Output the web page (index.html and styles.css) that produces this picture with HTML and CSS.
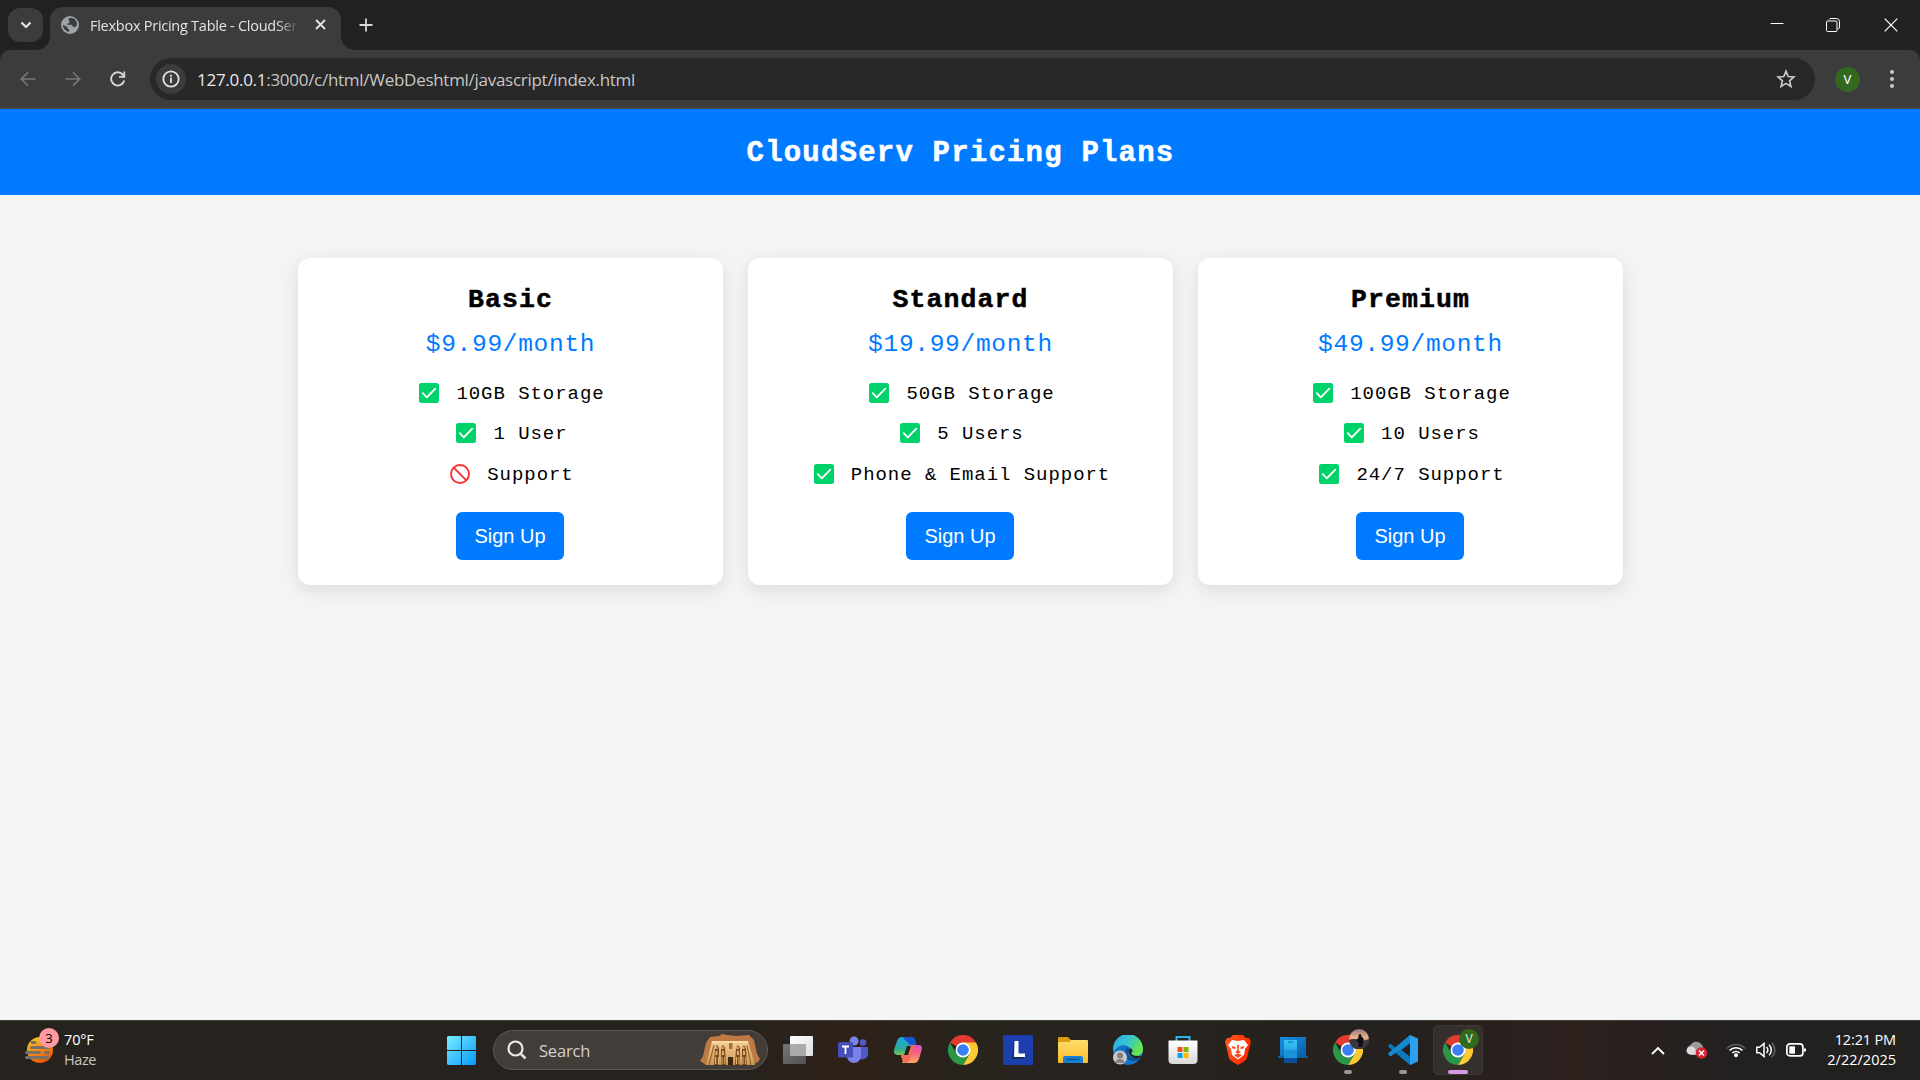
FILE: index.html
```html
<!DOCTYPE html>
<html lang="en">
<head>
<meta charset="utf-8">
<title>Flexbox Pricing Table - CloudServ</title>
<link rel="stylesheet" href="styles.css">
</head>
<body>
<svg class="defs" aria-hidden="true">
  <defs>
    <symbol id="check" viewBox="0 0 20 20"><rect width="20" height="20" rx="2.5" fill="#00d26a"/><path d="M3.8 10.2l4 4.1 8.5-8.6" fill="none" stroke="#fff" stroke-width="1.9" stroke-linecap="round" stroke-linejoin="round"/></symbol>
    <symbol id="ban" viewBox="0 0 20 20"><circle cx="10" cy="10" r="9" fill="none" stroke="#f92f32" stroke-width="1.9"/><path d="M3.7 3.7l12.6 12.6" stroke="#f92f32" stroke-width="1.9"/></symbol>
    <symbol id="chrome" viewBox="0 0 30 30"><path d="M15 15L2 7.5A15 15 0 0 1 28 7.5z" fill="#e33b2e"/><path d="M15 7.5H28A15 15 0 0 1 15 30L21.5 18.8z" fill="#fcc934"/><path d="M2 7.5A15 15 0 0 0 15 30L21.5 18.8 15 15 8.5 18.8z" fill="#2a9647"/><circle cx="15" cy="15" r="7.5" fill="#fff"/><circle cx="15" cy="15" r="5.8" fill="#3880f4"/></symbol>
    <linearGradient id="win" x2="1" y2="1"><stop stop-color="#77efff"/><stop offset="1" stop-color="#0797fc"/></linearGradient>
    <linearGradient id="sun" x2=".5" y2="1"><stop stop-color="#ffd21d"/><stop offset="1" stop-color="#e95808"/></linearGradient>
    <linearGradient id="stone" x2="0" y2="1"><stop stop-color="#f3cf98"/><stop offset="1" stop-color="#cf9852"/></linearGradient>
    <linearGradient id="grayf" x2="1" y2="1"><stop stop-color="#777"/><stop offset="1" stop-color="#505050"/></linearGradient>
    <linearGradient id="whitef" x2="1" y2="1"><stop stop-color="#fff"/><stop offset="1" stop-color="#ddd"/></linearGradient>
    <linearGradient id="copa" x2="0" y2="1"><stop stop-color="#19a4e8"/><stop offset=".5" stop-color="#2fae8c"/><stop offset="1" stop-color="#f5d51c"/></linearGradient>
    <linearGradient id="copb" x2="0" y2="1"><stop stop-color="#a652f5"/><stop offset=".55" stop-color="#f2598d"/><stop offset="1" stop-color="#ffab5c"/></linearGradient>
    <linearGradient id="fold" x2="0" y2="1"><stop stop-color="#ffdc6b"/><stop offset="1" stop-color="#fbbe2b"/></linearGradient>
    <linearGradient id="edge" x2="1" y2=".4"><stop stop-color="#2ba7e8"/><stop offset=".55" stop-color="#35c6d1"/><stop offset="1" stop-color="#67e44f"/></linearGradient>
    <linearGradient id="bag" x2="0" y2="1"><stop stop-color="#fff"/><stop offset="1" stop-color="#d9d9d9"/></linearGradient>
    <linearGradient id="lion" x2="1" y2=".3"><stop stop-color="#ff5a22"/><stop offset="1" stop-color="#ff2b00"/></linearGradient>
    <linearGradient id="lap" x2="1" y2="1"><stop stop-color="#1a8ee0"/><stop offset="1" stop-color="#0b5ea8"/></linearGradient>
    <linearGradient id="phone" x2="0" y2="1"><stop stop-color="#38c4f5"/><stop offset="1" stop-color="#1787d8"/></linearGradient>
    <linearGradient id="sky" x2="0" y2="1"><stop stop-color="#8d7a7d"/><stop offset=".45" stop-color="#f0b489"/><stop offset=".7" stop-color="#5a4b58"/><stop offset="1" stop-color="#39404d"/></linearGradient>
  </defs>
</svg>

<div class="screen">
  <div class="titlebar">
    <div class="tab-search"><svg width="12" height="8" viewBox="0 0 12 8"><path d="M1.5 1.5L6 6l4.500-4.500" fill="none" stroke="#e6e6e6" stroke-width="2.2"/></svg></div>
    <div class="tab">
      <svg width="18" height="18" viewBox="0 0 18 18"><circle cx="9" cy="9" r="9" fill="#9ba2aa"/><path d="M9.500 1.800c-2 .6-2.500 1.700-1.800 2.700 1 .4 1.300 1.300.5 2.300-.8 1-2 .7-2.200 1.900h3.900c1.600 0 1.900 1.300 1.900 2.400h1.700c1.600-.2 2.200-1.600 2.500-3.200-.2-3.300-2.900-6-6.500-6.100zM1.900 8.800c0 3.500 2.700 6.700 6.200 7.100v-2.600c-1.400-.2-1.700-1.200-1.700-2.400z" fill="#3c3c3c"/></svg>
      <span class="tab-title">Flexbox Pricing Table - CloudSer</span>
      <svg width="11" height="11" viewBox="0 0 11 11"><path d="M1 1l9 9M10 1l-9 9" stroke="#e3e3e3" stroke-width="1.800"/></svg>
    </div>
    <svg class="new-tab" width="14" height="14" viewBox="0 0 14 14"><path d="M7 .5v13M.5 7h13" stroke="#d8d8d8" stroke-width="1.800"/></svg>
    <div class="window-buttons">
      <svg width="14" height="14" viewBox="0 0 14 14"><path d="M.5 5.500h13" stroke="#fff"/></svg>
      <svg width="14" height="14" viewBox="0 0 14 14"><path d="M3 1.500Q3.500.5 5 .5h5.500q3 0 3 3V9q0 1.500-1.500 2" fill="none" stroke="#fff"/><rect x=".5" y="3" width="10.500" height="10.500" rx="1" fill="none" stroke="#fff"/></svg>
      <svg width="14" height="14" viewBox="0 0 14 14"><path d="M.7.700l12.600 12.600M13.300.700L.7 13.300" stroke="#fff" stroke-width="1.200"/></svg>
    </div>
  </div>

  <div class="toolbar">
    <div class="nav-buttons">
      <svg width="16" height="16" viewBox="0 0 16 16"><path d="M15.500 8H1.500M8 1.300L1.300 8 8 14.700" fill="none" stroke="#777" stroke-width="1.700"/></svg>
      <svg width="16" height="16" viewBox="0 0 16 16"><path d="M.5 8h14M8 1.300L14.700 8 8 14.700" fill="none" stroke="#777" stroke-width="1.700"/></svg>
      <svg width="16" height="16" viewBox="0 0 16 16"><path d="M14.200 9.500A6.600 6.600 0 1 1 12.700 3.500L14.500 5.500" fill="none" stroke="#d5d5d5" stroke-width="1.900"/><path d="M15.200.5v6.200H9V5h4.400V.5z" fill="#d5d5d5"/></svg>
    </div>
    <div class="address">
      <span class="site-info"><svg width="18" height="18" viewBox="0 0 18 18"><circle cx="9" cy="9" r="7.700" fill="none" stroke="#e3e3e3" stroke-width="1.800"/><path d="M9 7.700v5.200M9 4.800v1.900" stroke="#e3e3e3" stroke-width="1.800"/></svg></span>
      <span class="url">127.0.0.1<span>:3000/c/html/WebDeshtml/javascript/index.html</span></span>
      <svg class="star" width="20" height="20" viewBox="0 0 20 20"><path d="M10 2.200l2.200 5.300 5.700.5-4.300 3.800 1.300 5.600L10 14.400l-4.900 3 1.300-5.600L2.100 8l5.700-.5z" fill="none" stroke="#c9c9c9" stroke-width="1.700"/></svg>
    </div>
    <span class="profile">V</span>
    <svg class="menu" width="6" height="18" viewBox="0 0 6 18"><g fill="#c9c9c9"><circle cx="3" cy="2" r="2"/><circle cx="3" cy="9" r="2"/><circle cx="3" cy="16" r="2"/></g></svg>
  </div>

  <main class="page">
    <header class="header"><h1>CloudServ Pricing Plans</h1></header>
    <section class="pricing">
      <article class="card">
        <h2>Basic</h2>
        <p class="price">$9.99/month</p>
        <ul>
          <li><svg><use href="#check"/></svg>10GB Storage</li>
          <li><svg><use href="#check"/></svg>1 User</li>
          <li><svg><use href="#ban"/></svg>Support</li>
        </ul>
        <button>Sign Up</button>
      </article>
      <article class="card">
        <h2>Standard</h2>
        <p class="price">$19.99/month</p>
        <ul>
          <li><svg><use href="#check"/></svg>50GB Storage</li>
          <li><svg><use href="#check"/></svg>5 Users</li>
          <li><svg><use href="#check"/></svg>Phone &amp; Email Support</li>
        </ul>
        <button>Sign Up</button>
      </article>
      <article class="card">
        <h2>Premium</h2>
        <p class="price">$49.99/month</p>
        <ul>
          <li><svg><use href="#check"/></svg>100GB Storage</li>
          <li><svg><use href="#check"/></svg>10 Users</li>
          <li><svg><use href="#check"/></svg>24/7 Support</li>
        </ul>
        <button>Sign Up</button>
      </article>
    </section>
  </main>

  <footer class="taskbar">
    <div class="weather">
      <div class="weather-icon">
        <svg width="28" height="30" viewBox="0 0 28 30"><circle cx="15" cy="15" r="13" fill="url(#sun)"/><path d="M7 7.500h3M6.500 12.500h17M1.500 17.500h13M20.500 17.500h3M1.500 22.500h21" stroke="#77716b" stroke-width="3" stroke-linecap="round"/></svg>
        <span class="count">3</span>
      </div>
      <div class="weather-text"><span>70°F</span><span class="dim">Haze</span></div>
    </div>
    <div class="apps">
      <div class="app"><svg width="29" height="29" viewBox="0 0 29 29"><path d="M1 0h13v14H0V1zM15 0h13l1 1v13H15zM0 15h14v14H1l-1-1zM15 15h14v13l-1 1H15z" fill="url(#win)"/></svg></div>
      <div class="search">
        <svg width="20" height="20" viewBox="0 0 20 20"><circle cx="8.500" cy="8.500" r="7" fill="none" stroke="#e8ebef" stroke-width="2.200"/><path d="M13.500 13.500l5 5" stroke="#dde1e6" stroke-width="2.600"/></svg>
        <span>Search</span>
        <svg class="temple" width="60" height="32" viewBox="0 0 60 32"><path d="M0 27l3-5L6 9l4-6 9-1 3-2 5 1 10 1 12-1 5 5 3 14 3 5-2 3-6 3H6z" fill="#bf7a44"/><path d="M6 31L12 7h36l7 24z" fill="url(#stone)"/><path d="M12 8h36" stroke="#fbdcab" stroke-width="1.500"/><path d="M9 31l5-20M51 31l-4-20" stroke="#9a622c" stroke-width="1.200"/><path d="M28 31v-8h5v8z" fill="#3d2610"/><path d="M29 9h3.500v6H29z" fill="#a87339"/><g fill="#7b4e22"><path d="M14 31l1-17 2-3 2 3v17zM21 31V14l2-3 2 3 1 17zM35 31l1-17 2-3 2 3v17zM42 31V14l2-3 2 3 1 17z"/></g><g fill="#dfae6b"><circle cx="16.500" cy="14" r="1.300"/><circle cx="22.500" cy="14" r="1.300"/><circle cx="37.500" cy="14" r="1.300"/><circle cx="43.500" cy="14" r="1.300"/><path d="M15.500 17h2v4h-2zM22 17h2v4h-2zM37 17h2v4h-2zM43 17h2v4h-2zM15 23h1.200v7H15zM18 23h1v7h-1zM21.500 23h1v7h-1zM24.300 23h1v7h-1zM36 23h1v7h-1zM38.500 23h1v7h-1zM42.500 23h1v7h-1zM45.300 23h1v7h-1z"/></g></svg>
      </div>
      <div class="app"><svg width="30" height="28" viewBox="0 0 30 28"><rect y="8" width="23" height="20" rx="1" fill="url(#grayf)"/><rect x="7" width="23" height="20" rx="1" fill="url(#whitef)"/><path d="M7 8h16v12H7z" fill="#aaa"/></svg></div>
      <div class="app"><svg width="30" height="28" viewBox="0 0 30 28"><circle cx="25" cy="6.500" r="3.300" fill="#5059c9"/><path d="M20 11h10v7a5.500 5.500 0 0 1-10 3z" fill="#5059c9"/><circle cx="16" cy="5" r="4.500" fill="#7b83eb"/><path d="M9 11h14v9a7 7 0 0 1-14 0z" fill="#7b83eb"/><rect y="6" width="15" height="15.500" rx="1.500" fill="#474fbb"/><path d="M4 10.500h7M7.500 10.500v7.500" stroke="#fff" stroke-width="1.800"/></svg></div>
      <div class="app"><svg width="30" height="28" viewBox="0 0 30 28"><path d="M18 2h3l2 7h4q3 1 1.500 5.500L26 23q-1.500 4-5 4H9l2-3z" fill="url(#copb)"/><path d="M12 26H10l-2-7H4q-4-1-3-5L4 5q1.500-4 5-4h11l-2 3-4.500 14q-1 2-4 2z" fill="url(#copa)"/><path d="M10 1h9q2.500 0 3.500 4l1 4h-5q-3 0-3.500-2T11 3z" fill="#1656d1"/><path d="M8 19h4q3 0 4-3l2-7h4l-5 14q-1.500 4-4 4-3 0-4-4z" fill="#f36b5c"/><path d="M14 10h4l-3 9h-4z" fill="#292019"/></svg></div>
      <div class="app"><svg width="30" height="30"><use href="#chrome"/></svg></div>
      <div class="app"><svg width="30" height="30" viewBox="0 0 30 30"><path d="M0 0h30v30H0z" fill="#1c3fad"/><path d="M11 6l-2 18h11l2-4h-9z" fill="#0d2d5c"/><path d="M11.500 6h4v12.500H22V22H11z" fill="#fff"/></svg></div>
      <div class="app"><svg width="30" height="28" viewBox="0 0 30 28"><path d="M0 2q0-1 1-1h9l3 3v5H0z" fill="#dd9b08"/><path d="M0 6h11l2-2h16q1 0 1 1v21q0 1-1 1H1q-1 0-1-1z" fill="url(#fold)"/><path d="M5 27v-5q0-2 2-2h16q2 0 2 2v5z" fill="#1283d5"/><path d="M9 23.500h12" stroke="#075390" stroke-width="1.400" stroke-linecap="round"/></svg></div>
      <div class="app"><svg width="32" height="30" viewBox="0 0 32 30"><circle cx="16" cy="15" r="15" fill="#1474c9"/><path d="M1 14A15 15 0 0 1 31 14q0 6-6 7-8 0-7-3 2-3-1-6-5-4-11 0-4 3-4 5z" fill="url(#edge)"/><path d="M16 12q-5 4-2 10 4 6 13 3l2-3q-5 2-10 0-4-2-3-5 2-2 0-5z" fill="#0c4f94"/><path d="M19 13q3 4 0 5 1 3 7 3h4v1q-8 3-12-2-3-4 1-7z" fill="#26211e"/><circle cx="8" cy="22.500" r="7" fill="#c9c9c7"/><circle cx="8" cy="20.500" r="3" fill="#85817e"/><path d="M3.500 28q0-4 4.500-4t4.500 4z" fill="#85817e"/></svg></div>
      <div class="app"><svg width="30" height="30" viewBox="0 0 30 30"><path d="M8.500 7V2h13v5" fill="none" stroke="#29b6f0" stroke-width="2"/><path d="M.5 5.500h29V25q0 4-4 4h-21q-4 0-4-4z" fill="url(#bag)"/><path d="M9.500 12h5v5h-5z" fill="#f25022"/><path d="M15.500 12h5v5h-5z" fill="#7fba00"/><path d="M9.500 18h5v5h-5z" fill="#00a4ef"/><path d="M15.500 18h5v5h-5z" fill="#ffb900"/></svg></div>
      <div class="app"><svg width="26" height="30" viewBox="0 0 26 30"><path d="M8 0h10l3 3 3 0 2 4-1 3-3 13q-1 3-9 7-8-4-9-7L1 10 0 7l2-4 3 0z" fill="url(#lion)"/><path d="M7 5l6 1 6-1 4 5-3 4-1 6-6 4.500L7 20l-1-6-3-4z" fill="#fff"/><path d="M6.500 11l4 1v2l-3-.5zM19.500 11l-4 1v2l3-.5zM12 10h2l-.3 5 2 2.500-2.700 1-2.700-1 2-2.500zM9 20l4-1.500 4 1.500-4 3z" fill="#ff451c"/></svg></div>
      <div class="app"><svg width="30" height="28" viewBox="0 0 30 28"><path d="M2 1h26v19H2z" fill="url(#lap)"/><path d="M0 20h30v1q0 1-1 1H1q-1 0-1-1z" fill="#0f5f9e"/><path d="M6 4h13v23H6z" fill="url(#phone)"/><path d="M10 6h5" stroke="#0e63a8"/><path d="M6 14h13v8H6z" fill="#1a93db"/><path d="M6 22h13v5H6z" fill="#0a4e99"/></svg></div>
      <div class="app running"><svg width="30" height="30"><use href="#chrome"/></svg><svg class="badge" viewBox="0 0 20 20"><circle cx="10" cy="10" r="10" fill="url(#sky)"/><path d="M0 11q5-2 10 0t10-1a10 10 0 0 1-20 1z" fill="#39373f"/><path d="M11 5q1.800 0 1.300 2.500l2 1.500.2 4-1 1.500v3.500h-4v-5l-2.500-1 2.500-3.500Q9.300 5 11 5z" fill="#120f14"/></svg></div>
      <div class="app running"><svg width="30" height="30" viewBox="0 0 30 30"><path d="M22 0L8 13 2.500 8.800.5 10v2L22 30l2-1V7z" fill="#0c78bd"/><path d="M22 0v7.500L2.500 21.500.5 20v-2z" fill="#168ad2"/><path d="M22 0l8 3.500v23L22 30z" fill="#2ba1f0"/><path d="M22 8.500v13L13.500 15z" fill="#27211e"/></svg></div>
      <div class="app running active"><svg width="30" height="30"><use href="#chrome"/></svg><span class="badge letter">V</span></div>
    </div>
    <div class="tray">
      <svg class="chev" width="14" height="9" viewBox="0 0 14 9"><path d="M1 8l6-6 6 6" fill="none" stroke="#fff" stroke-width="1.900"/></svg>
      <svg class="cloud" width="22" height="18" viewBox="0 0 22 18"><path d="M5 14a5 5 0 0 1-1-9.500A7 7 0 0 1 16 4q2 2 1 6l-5 4z" fill="#9b9b9b"/><path d="M4.500 13.500q-4-.5-4-4 .5-4 5-4 2.500.2 4 2.500L10 13.500z" fill="#dcdcdc"/><circle cx="15.500" cy="12" r="5.800" fill="#d7232f"/><path d="M13 9.500l5 5M18 9.500l-5 5" stroke="#fff" stroke-width="1.500"/></svg>
      <svg class="wifi" width="20" height="16" viewBox="0 0 20 16"><g fill="none" stroke-width="1.600"><path d="M1 6.500a12 12 0 0 1 18 0" stroke="#625f5d"/><path d="M3.500 8.500a9 9 0 0 1 13 0M6.300 11a5.300 5.300 0 0 1 7.400 0" stroke="#fff"/></g><circle cx="10" cy="13.200" r="2" fill="#fff"/></svg>
      <svg class="vol" width="20" height="16" viewBox="0 0 20 16"><g fill="none" stroke-width="1.500"><path d="M.8 5.300h2.700L8 1.500v13l-4.500-3.800H.8z" stroke="#fff"/><path d="M10.500 5a4 4 0 0 1 0 6M13 2.800a7 7 0 0 1 0 10.400" stroke="#fff"/><path d="M15.700.8a10 10 0 0 1 0 14.400" stroke="#66615f"/></g></svg>
      <svg class="bat" width="20" height="14" viewBox="0 0 20 14"><rect x=".9" y=".9" width="16" height="12" rx="3" fill="none" stroke="#fff" stroke-width="1.700"/><rect x="3.300" y="3.300" width="5.700" height="7.400" fill="#fff"/><path d="M18 5.200l2 .5v2.600l-2 .5z" fill="#fff"/></svg>
      <div class="clock"><span>12:21 PM</span><span class="date">2/22/2025</span></div>
    </div>
  </footer>
</div>
</body>
</html>
```
FILE: styles.css
```css
* { box-sizing: border-box; }
body { margin: 0; overflow: hidden; font-family: "Open Sans", "Noto Sans", sans-serif; }
svg { display: block; flex-shrink: 0; }
.defs { position: absolute; width: 0; height: 0; }
.screen { width: 1920px; height: 1080px; display: flex; flex-direction: column; background: #202221; }

/* Browser window */
.titlebar { height: 50px; display: flex; align-items: flex-start; padding-left: 8px; }
.tab-search { width: 35px; height: 34px; margin-top: 8px; border-radius: 12px; background: #3c3c3c; display: flex; align-items: center; justify-content: center; }
.tab { position: relative; width: 291px; height: 43px; margin: 7px 0 0 7px; padding: 0 15px 8px 11px; border-radius: 13px 13px 0 0; background: #3c3c3c; display: flex; align-items: center; }
.tab::before, .tab::after { content: ""; position: absolute; bottom: 0; width: 13px; height: 13px; }
.tab::before { left: -13px; background: radial-gradient(circle at 0 0, transparent 12.5px, #3c3c3c 13px); }
.tab::after { right: -13px; background: radial-gradient(circle at 100% 0, transparent 12.5px, #3c3c3c 13px); }
.tab-title { width: 212px; margin: 1px auto 0 11px; color: #e3e3e3; font-size: 14.5px; letter-spacing: -.26px; white-space: nowrap; -webkit-mask: linear-gradient(90deg, #000 88%, transparent 99%); mask: linear-gradient(90deg, #000 88%, transparent 99%); }
.new-tab { margin: 18px 0 0 18px; }
.window-buttons { margin: 18px 22px 0 auto; display: flex; gap: 42px; }
.window-buttons svg:nth-child(2) { margin-right: 2px; }

.toolbar { height: 59px; padding: 8px 25px 7px 20px; display: flex; align-items: center; background: #3c3c3c; border-radius: 10px 10px 0 0; border-bottom: 2px solid #474747; }
.nav-buttons { display: flex; gap: 29px; }
.address { width: 1665px; height: 42px; margin-left: 24px; padding: 0 19px 0 6px; border-radius: 21px; background: #282828; display: flex; align-items: center; }
.site-info { width: 30px; height: 30px; border-radius: 50%; background: #3c3c3c; display: flex; align-items: center; justify-content: center; }
.url { margin-left: 11px; color: #e8e8e8; font-size: 17px; letter-spacing: -.28px; white-space: nowrap; }
.url span { color: #c7c7c7; }
.star { margin-left: auto; }
.profile { width: 25px; height: 25px; margin-left: 20px; border-radius: 50%; background: #33691e; color: #fff; font: 13px/25px Roboto, sans-serif; text-align: center; }
.menu { margin-left: auto; }

/* Pricing page */
.page { flex: 1; background: #f4f4f4; font-family: "Liberation Mono", monospace; color: #000; }
.header { height: 86px; background: #007bff; color: #fff; text-align: center; }
.header h1 { margin: 0; padding-left: 1px; font-size: 29px; line-height: 89px; letter-spacing: 1.2px; -webkit-text-stroke: .5px; }
.pricing { padding-top: 63px; display: flex; justify-content: center; gap: 25px; }
.card { width: 425px; height: 327px; padding: 21px 20px 20px; border-radius: 12px; background: #fff; box-shadow: 0 5px 18px rgba(0, 0, 0, .1); display: flex; flex-direction: column; align-items: center; }
.card h2 { margin: 0; padding-left: 1px; font-size: 26.5px; line-height: 42px; letter-spacing: 1.1px; -webkit-text-stroke: .5px; }
.price { margin: 2px 0 0; padding-left: 1px; color: #007bff; font-size: 24.5px; line-height: 43px; letter-spacing: .7px; }
.card ul { list-style: none; margin: 7px 0 17px; padding: 0 0 0 4px; }
.card li { height: 40.5px; padding-top: 1px; display: flex; align-items: center; justify-content: center; gap: 17px; font-size: 19px; letter-spacing: .95px; white-space: nowrap; }
.card li svg { width: 20px; height: 20px; margin-bottom: 2px; }
.card button { width: 108px; height: 48px; padding: 1px 0 0; border: 0; border-radius: 6px; background: #007bff; color: #fff; font: 20px "Liberation Sans", Arial, sans-serif; }

/* Taskbar */
.taskbar { height: 60px; padding-bottom: 1px; display: flex; align-items: center; border-top: 1px solid #3d3d3a; color: #fff; background: linear-gradient(90deg, #26221e 0, #26221e 38%, #2e2118 44%, #28231d 50%, #25211e 72%, #2c201d 82%, #232120 90%); }
.weather { width: 436px; padding-left: 25px; display: flex; align-items: center; gap: 11px; }
.weather-icon { position: relative; }
.count { position: absolute; left: 14px; top: -7px; width: 20px; height: 20px; border-radius: 50%; background: #ff99a4; color: #000; font-size: 13px; line-height: 20px; text-align: center; }
.weather-text, .clock { display: flex; flex-direction: column; margin-top: -1px; font-size: 14.5px; line-height: 20px; letter-spacing: -.15px; white-space: nowrap; }
.dim { color: #c9c7c5; letter-spacing: -.4px; }
.apps { display: flex; align-items: center; gap: 5px; }
.app { position: relative; width: 50px; height: 50px; display: flex; align-items: center; justify-content: center; border-radius: 5px; }
.search { width: 275px; height: 40px; margin-left: 2px; padding: 0 7px 0 13px; border: 1px solid #5e5855; border-radius: 20px; background: #433d3a; display: flex; align-items: center; gap: 12px; font-size: 16.5px; letter-spacing: -.2px; color: #d2d0cf; }
.temple { margin-left: auto; }
.running::after { content: ""; position: absolute; bottom: 1px; width: 8px; height: 4px; border-radius: 2px; background: #999694; }
.active { background: #352f2d; border: 1px solid #3d3836; }
.active::after { bottom: 0; width: 20px; background: #d899e5; }
.badge { position: absolute; right: 4px; top: 4px; width: 20px; height: 20px; }
.active .badge { right: 3px; top: 3px; }
.letter { border-radius: 50%; background: #33691e; color: #dce8d8; font: 12px/20px Roboto, sans-serif; text-align: center; }
.tray { margin-left: auto; padding-right: 24px; display: flex; align-items: center; }
.chev { margin-right: -1px; }
.cloud { margin-left: 22px; }
.wifi { margin-left: 18px; }
.vol { margin-left: 10px; }
.bat { margin-left: 10px; }
.clock { width: 90px; align-items: flex-end; }
.date { letter-spacing: 0; }
```
